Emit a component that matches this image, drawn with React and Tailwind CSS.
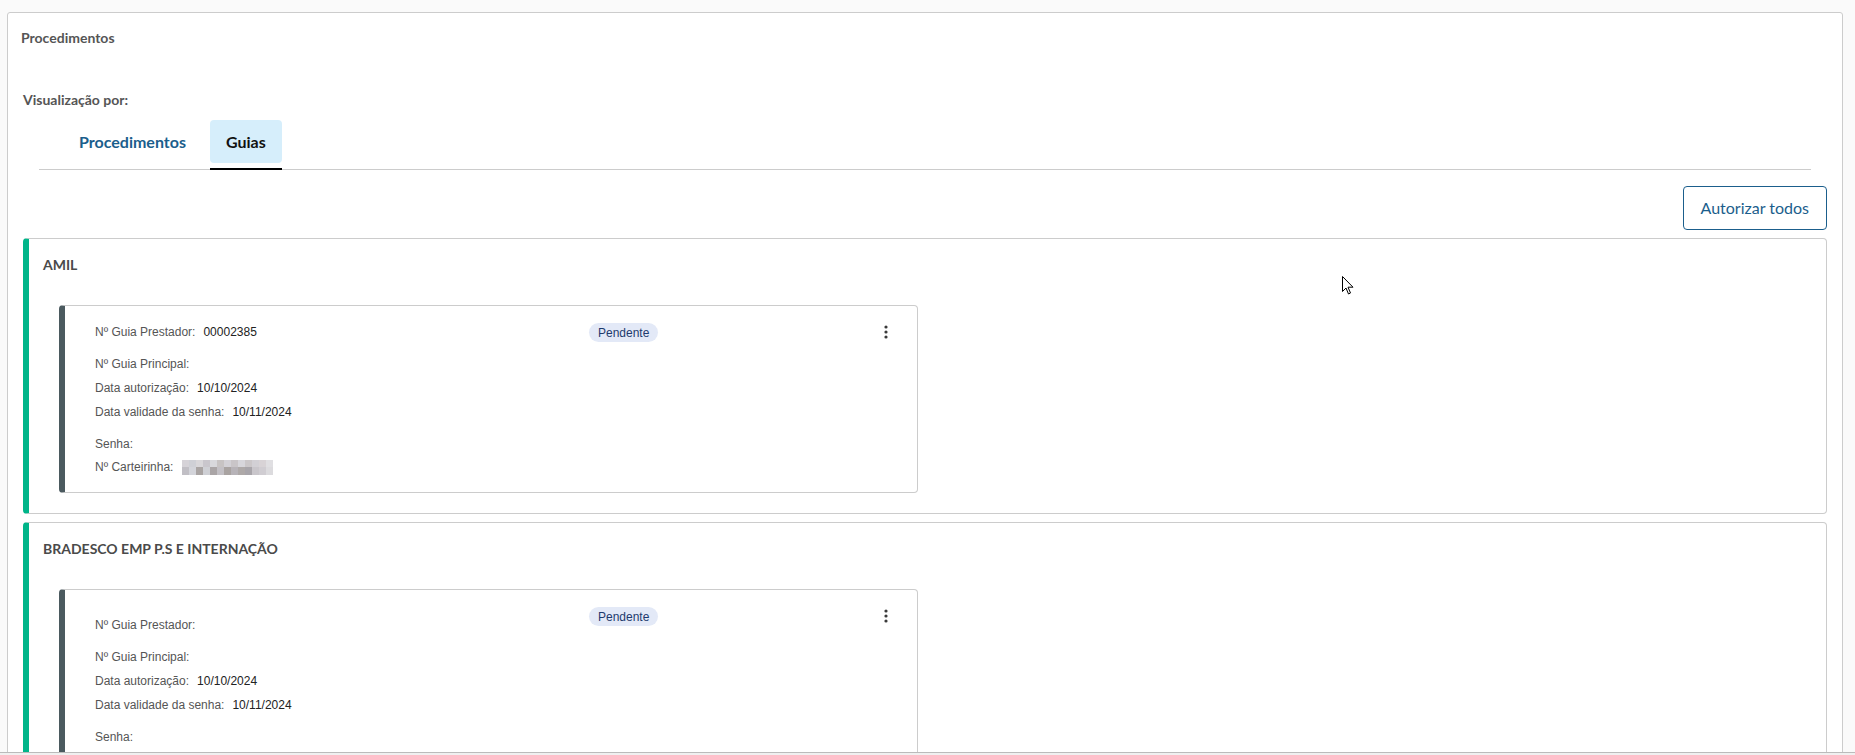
import React from 'react';

const guias = [
  {
    convenio: 'AMIL',
    prestador: '00002385',
    principal: '',
    autorizacao: '10/10/2024',
    validade: '10/11/2024',
    shiftLabel: false,
  },
  {
    convenio: 'BRADESCO EMP P.S E INTERNAÇÃO',
    prestador: '',
    principal: '',
    autorizacao: '10/10/2024',
    validade: '10/11/2024',
    shiftLabel: true,
  },
];

// blurred card number, two rows of pixel blocks
const blurTop = ['bg-[#d6d3d8]', 'bg-[#cfd0d6]', 'bg-[#d9d7da]', 'bg-[#c9c6cc]', 'bg-[#d8d8dc]', 'bg-[#c7c3c3]', 'bg-[#d3d1d6]', 'bg-[#c9c5c8]', 'bg-[#d7d6db]', 'bg-[#cbc7c9]', 'bg-[#d2d0d5]', 'bg-[#d8d3d6]', 'bg-[#e0dfe2]'];
const blurBottom = ['bg-[#c1bfc5]', 'bg-[#d3d4da]', 'bg-[#a9a4a3]', 'bg-[#cfd0d5]', 'bg-[#aaa5a6]', 'bg-[#c3c0c5]', 'bg-[#a9a3a1]', 'bg-[#b7b3b8]', 'bg-[#aea9a8]', 'bg-[#a8a5aa]', 'bg-[#c9c6cb]', 'bg-[#d0cdd2]', 'bg-[#dcdbde]'];

const Kebab = () => (
  <svg width="4" height="14" viewBox="0 0 4 14" fill="#3a3a3a">
    <circle cx="2" cy="2" r="1.6" />
    <circle cx="2" cy="7" r="1.6" />
    <circle cx="2" cy="12" r="1.6" />
  </svg>
);

const Row = ({ label, value, className = '' }) => (
  <div className={`flex items-center gap-[8px] leading-[16px] ${className}`}>
    <span className="text-[#555]">{label}</span>
    {value && <span className="text-[#222]">{value}</span>}
  </div>
);

const GuiaCard = ({ guia }) => (
  <div className="w-[859px] border border-[#ccc] border-l-[6px] border-l-[#4b5a5f] rounded-[4px] pl-[30px] pt-[17px] pb-[17px] font-['Liberation_Sans',Arial,sans-serif] text-[12px]">
    <div className="flex items-start">
      <div className={`w-[494px] flex gap-[8px] leading-[19px] ${guia.shiftLabel ? 'pt-[9px]' : ''}`}>
        <span className="text-[#555]">Nº Guia Prestador:</span>
        {guia.prestador && <span className="text-[#222]">{guia.prestador}</span>}
      </div>
      <span className="h-[19px] px-[9px] rounded-full bg-[#e3e9f7] text-[#1e3a6e] flex items-center">Pendente</span>
      <div className="ml-auto mr-[29px] h-[18px] flex items-center">
        <Kebab />
      </div>
    </div>
    <div className="mt-[14px] flex flex-col">
      <Row label="Nº Guia Principal:" value={guia.principal} />
      <Row label="Data autorização:" value={guia.autorizacao} className="mt-[8px]" />
      <Row label="Data validade da senha:" value={guia.validade} className="mt-[8px]" />
      <Row label="Senha:" className="mt-[16px]" />
      <div className="mt-[7px] flex items-center gap-[9px] leading-[16px]">
        <span className="text-[#555]">Nº Carteirinha:</span>
        <div className="flex flex-col">
          <div className="flex">
            {blurTop.map((c, i) => (
              <span key={i} className={`w-[7px] h-[7px] ${c}`} />
            ))}
          </div>
          <div className="flex">
            {blurBottom.map((c, i) => (
              <span key={i} className={`w-[7px] h-[8px] ${c}`} />
            ))}
          </div>
        </div>
      </div>
    </div>
  </div>
);

export default function App() {
  return (
    <div className="relative min-h-screen bg-[#fafafa] pt-[12px] font-['Lato',sans-serif]">
      <div className="ml-[7px] mr-[12px] border border-[#ccc] rounded-[3px] bg-white pb-10">
        <div className="pl-[13px] pt-[17px] text-[14px] font-bold leading-[16px] text-[#555]">Procedimentos</div>

        <div className="ml-[15px] mt-[46px] text-[14px] font-bold leading-[16px] text-[#555]">Visualização por:</div>

        <div className="mx-[31px] mt-[12px] pl-[24px] flex gap-2 border-b border-[#ccc]">
          <div className="-mb-px pb-[7px]">
            <button className="h-[43px] px-4 rounded-[4px] text-[16px] font-bold text-[#1b5e8c]">Procedimentos</button>
          </div>
          <div className="-mb-px pb-[5px] border-b-2 border-black">
            <button className="h-[43px] px-4 rounded-[4px] bg-[#d6eefb] text-[16px] font-bold text-[#111]">Guias</button>
          </div>
        </div>

        <div className="mt-[16px] pr-[15px] flex justify-end">
          <button className="h-[44px] px-[17px] border border-[#1b5e8c] rounded-[4px] text-[16px] text-[#1b5e8c]">Autorizar todos</button>
        </div>

        <div className="mt-[8px] px-[15px] flex flex-col gap-2">
          {guias.map((g) => (
            <div key={g.convenio} className="border border-[#ccc] border-l-[6px] border-l-[#00b589] rounded-[4px] pl-[14px] pt-[18px] pb-[20px]">
              <div className="text-[14px] font-bold leading-[16px] text-[#4a4a4a]">{g.convenio}</div>
              <div className="mt-[32px] ml-[16px]">
                <GuiaCard guia={g} />
              </div>
            </div>
          ))}
        </div>
      </div>

      <svg className="absolute top-[276px] left-[1342px]" width="12" height="19" viewBox="0 0 12 19">
        <path d="M0.5 0.5 L0.5 15.5 L4 12 L6.5 18 L8.5 17 L6 11.2 L11 11.2 Z" fill="#fff" stroke="#000" strokeWidth="1" strokeLinejoin="round" />
      </svg>

      <div className="fixed bottom-0 left-0 right-0 h-[3px] border-t border-[#bbb] bg-[#f0f0f0]" />
    </div>
  );
}
